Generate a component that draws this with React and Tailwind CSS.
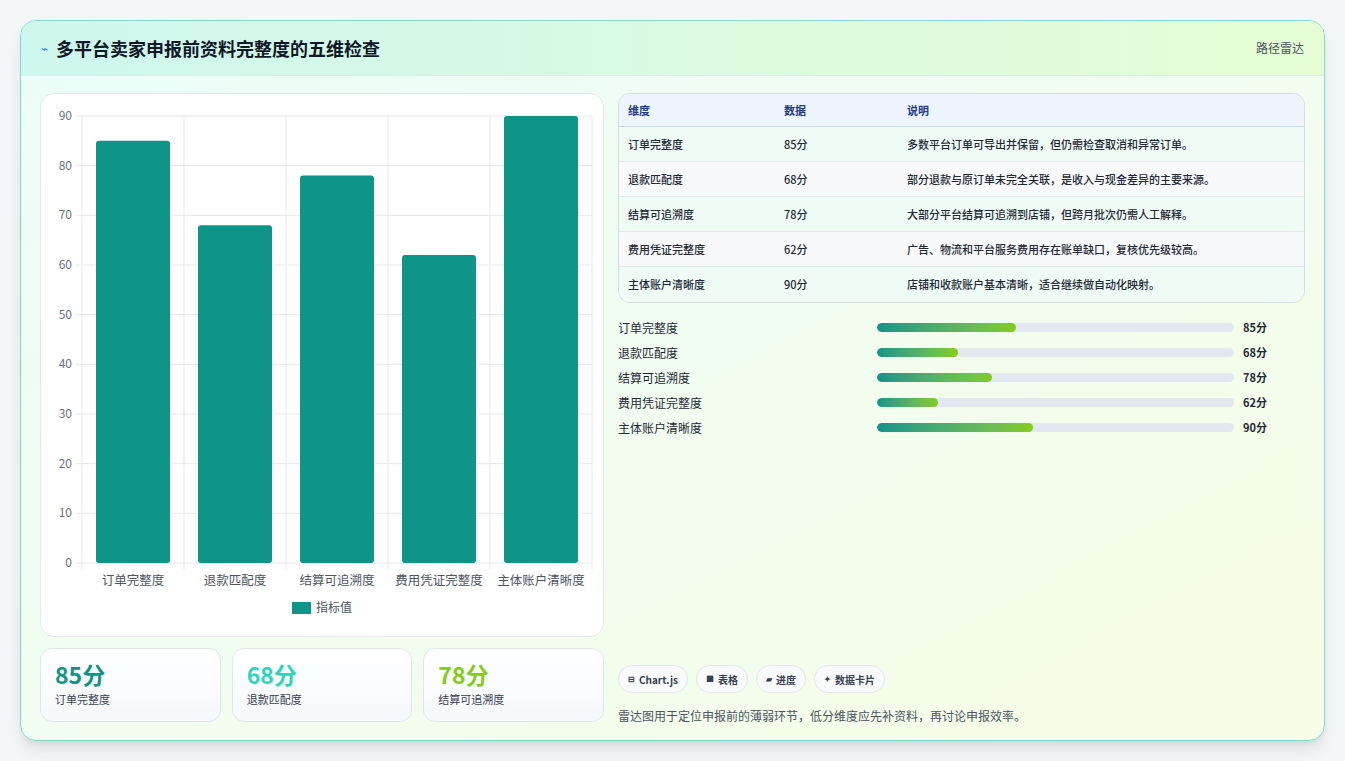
import React from "react";

const items = [
  { name: "订单完整度", v: 85, note: "多数平台订单可导出并保留，但仍需检查取消和异常订单。" },
  { name: "退款匹配度", v: 68, note: "部分退款与原订单未完全关联，是收入与现金差异的主要来源。" },
  { name: "结算可追溯度", v: 78, note: "大部分平台结算可追溯到店铺，但跨月批次仍需人工解释。" },
  { name: "费用凭证完整度", v: 62, note: "广告、物流和平台服务费用存在账单缺口，复核优先级较高。" },
  { name: "主体账户清晰度", v: 90, note: "店铺和收款账户基本清晰，适合继续做自动化映射。" },
];

function Chart() {
  const left = 41, top = 22, bottom = 469, right = 551;
  const h = bottom - top;
  const cw = (right - left) / 5;
  const y = (v) => bottom - (v / 90) * h;
  return (
    <svg width="563" height="543" className="block">
      {[0, 10, 20, 30, 40, 50, 60, 70, 80, 90].map((t) => (
        <g key={t}>
          <line x1={left - 6} x2={right} y1={y(t)} y2={y(t)} stroke="#e5e7eb" />
          <text x={left - 10} y={y(t) + 4} textAnchor="end" fontSize="12" fill="#6b7280">{t}</text>
        </g>
      ))}
      {[0, 1, 2, 3, 4, 5].map((i) => (
        <line key={i} x1={left + i * cw} x2={left + i * cw} y1={top} y2={bottom + 6} stroke="#e5e7eb" />
      ))}
      {items.map((it, i) => (
        <g key={it.name}>
          <rect x={left + i * cw + 14} y={y(it.v)} width={cw - 28} height={bottom - y(it.v)} rx="3" fill="#0f9488" />
          <text x={left + i * cw + cw / 2} y={bottom + 22} textAnchor="middle" fontSize="12.5" fill="#4b5563">{it.name}</text>
        </g>
      ))}
      <rect x="251" y="508" width="19" height="12" fill="#0f9488" />
      <text x="275" y="518" fontSize="12" fill="#4b5563">指标值</text>
    </svg>
  );
}

export default function App() {
  return (
    <div className="w-[1345px] h-[761px] bg-[#f4f5f6] pt-[20px] px-[20px]" style={{ fontFamily: '"Noto Sans CJK SC", "Noto Sans", sans-serif' }}>
      <div className="h-[721px] rounded-[16px] border border-[#7fdcd0] overflow-hidden bg-gradient-to-br from-[#ecfdf9] to-[#f6fde6] shadow-lg flex flex-col">
        <div className="h-[55px] shrink-0 flex items-center justify-between px-[20px] bg-gradient-to-r from-[#cdf7ee] to-[#e6fcd4] border-b border-[#dbeee8]">
          <div className="flex items-center gap-[8px]">
            <span className="text-[#3b82f6] text-[12px]">⌁</span>
            <h1 className="text-[18px] font-bold text-[#111827]">多平台卖家申报前资料完整度的五维检查</h1>
          </div>
          <span className="text-[12px] text-[#4b5563]">路径雷达</span>
        </div>
        <div className="flex gap-[14px] px-[19px] pt-[17px]">
          <div className="w-[564px] flex flex-col gap-[11px]">
            <div className="h-[544px] bg-white rounded-[14px] border border-[#e5e7eb]">
              <Chart />
            </div>
            <div className="flex gap-[11px]">
              {[["85分", "订单完整度", "text-[#0f9488]"], ["68分", "退款匹配度", "text-[#2dd4bf]"], ["78分", "结算可追溯度", "text-[#84cc16]"]].map(([a, b, c]) => (
                <div key={b} className="w-[181px] h-[74px] rounded-[12px] border border-[#dfe7ea] bg-gradient-to-b from-white to-[#f5f8fc] px-[14px] pt-[10px]">
                  <div className={`text-[23px] font-bold leading-[30px] ${c}`}>{a}</div>
                  <div className="text-[11px] text-[#374151] mt-[2px]">{b}</div>
                </div>
              ))}
            </div>
          </div>
          <div className="w-[689px] flex flex-col">
            <div className="rounded-[12px] border border-[#d4dde6] overflow-hidden text-[11px]">
              <div className="flex h-[33px] items-center bg-[#eef5fd] border-b border-[#c9d7ea] text-[#1e3a8a] font-bold">
                <div className="w-[165px] pl-[9px]">维度</div>
                <div className="w-[123px]">数据</div>
                <div>说明</div>
              </div>
              {items.map((it, i) => (
                <div key={it.name} className={`flex h-[35px] items-center border-b last:border-b-0 border-[#e5e9ee] text-[#1f2937] font-medium ${i % 2 ? "bg-[#f7f9fb]" : "bg-[#effcf6]"}`}>
                  <div className="w-[165px] pl-[9px]">{it.name}</div>
                  <div className="w-[123px]">{it.v}分</div>
                  <div>{it.note}</div>
                </div>
              ))}
            </div>
            <div className="mt-[12px] flex flex-col">
              {items.map((it) => (
                <div key={it.name} className="h-[25px] flex items-center text-[12px] text-[#1f2937]">
                  <div className="w-[259px]">{it.name}</div>
                  <div className="w-[357px] h-[9px] rounded-full bg-[#e2e8f0] overflow-hidden">
                    <div className="h-full rounded-full bg-gradient-to-r from-[#0f9488] to-[#84cc16]" style={{ width: `${(it.v - 44) / 100 * 100 * 0.95}%` }} />
                  </div>
                  <div className="ml-[9px] font-bold text-[11px]">{it.v}分</div>
                </div>
              ))}
            </div>
            <div className="mt-[225px] flex gap-[8px]">
              {[["⊟", "Chart.js"], ["■", "表格"], ["▰", "进度"], ["✦", "数据卡片"]].map(([ic, t]) => (
                <span key={t} className="h-[28px] px-[9px] rounded-full border border-[#e3e8ee] bg-[#f8fafc] flex items-center gap-[4px] text-[10px] font-bold text-[#374151]">
                  <span className="text-[8px] text-[#334155]">{ic}</span>{t}
                </span>
              ))}
            </div>
            <p className="mt-[14px] text-[12px] text-[#4b5563]">雷达图用于定位申报前的薄弱环节，低分维度应先补资料，再讨论申报效率。</p>
          </div>
        </div>
      </div>
    </div>
  );
}
